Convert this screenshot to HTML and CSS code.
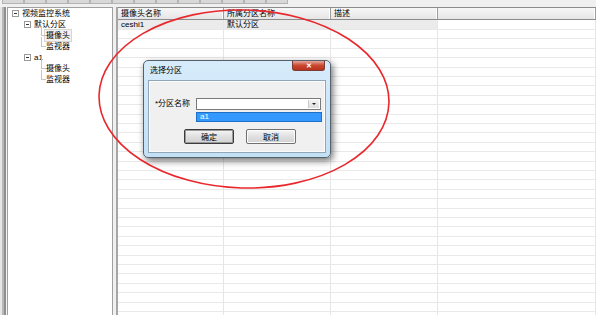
FILE: index.html
```html
<!DOCTYPE html>
<html lang="zh-CN">
<head>
    <meta charset="UTF-8">
    <title>视频监控系统</title>
    <link rel="stylesheet" href="styles.css">
</head>
<body>
<div class="app">
    <div class="tabs">
        <span></span><span></span><span></span><span></span><span></span><span></span>
        <span></span><span></span><span></span><span></span><span></span><span></span><span></span>
    </div>
    <div class="main">
        <div class="edge"></div>
        <div class="tree">
            <div class="node root"><span class="exp"></span>视频监控系统</div>
            <div class="node group"><span class="exp"></span>默认分区</div>
            <div class="node leaf"><span class="sel">摄像头</span></div>
            <div class="node leaf">监视器</div>
            <div class="node group"><span class="exp"></span>a1</div>
            <div class="node leaf">摄像头</div>
            <div class="node leaf">监视器</div>
        </div>
        <div class="gap"></div>
        <div class="grid">
            <div class="head">
                <div class="cell">摄像头名称</div>
                <div class="cell">所属分区名称</div>
                <div class="cell">描述</div>
                <div class="cell last"></div>
            </div>
            <div class="row first">
                <div class="cell">ceshi1</div>
                <div class="cell">默认分区</div>
                <div class="cell"></div>
                <div class="cell last"></div>
            </div>
            <div class="fill">
                <div class="cell"></div>
                <div class="cell"></div>
                <div class="cell"></div>
                <div class="cell last"></div>
            </div>
        </div>
    </div>

    <div class="dlg">
        <div class="dlg-title">
            <span class="dlg-name">选择分区</span>
            <span class="close">✕</span>
        </div>
        <div class="dlg-body">
            <div class="field">
                <label>*分区名称</label>
                <div class="combo">
                    <span class="arrow"></span>
                    <div class="drop">a1</div>
                </div>
            </div>
            <div class="buttons">
                <button class="btn default">确定</button>
                <button class="btn">取消</button>
            </div>
        </div>
    </div>

    <svg class="mark" width="596" height="315" viewBox="0 0 596 315">
        <ellipse cx="244" cy="99" rx="145" ry="89" transform="rotate(1.5 244 99)" fill="none" stroke="#e8282c" stroke-width="1.6"/>
    </svg>
</div>
</body>
</html>
```

FILE: styles.css
```css
body {
    margin: 0;
    font-family: "Liberation Sans", "Noto Sans CJK SC", sans-serif;
    font-size: 8px;
    color: #000;
}

.app {
    position: relative;
    width: 596px;
    height: 315px;
    overflow: hidden;
    background-color: #f0f0f0;
}

.tabs {
    display: flex;
    height: 4px;
    padding-left: 2px;
}

.tabs span {
    width: 20px;
    background-color: #d8d8d8;
    border: 1px solid #b4b4b4;
    border-top: none;
}

.main {
    display: flex;
    height: 308px;
    margin-top: 3px;
}

.edge {
    width: 7px;
    background: linear-gradient(90deg, #e6e6e6 0 2px, #b8b8b8 2px 4px, #8f8f8f 4px 6px, #f4f4f4 6px 7px);
}

.tree {
    width: 104px;
    background-color: #fff;
    border: 1px solid #a0a0a0;
    border-bottom: none;
}

.node {
    position: relative;
    display: flex;
    align-items: center;
    height: 11px;
    line-height: 11px;
    white-space: nowrap;
}

.root {
    padding-left: 4px;
}

.group {
    padding-left: 16px;
}

.leaf {
    padding-left: 38px;
}

.leaf::before {
    content: "";
    position: absolute;
    left: 33px;
    top: -4px;
    width: 4px;
    height: 9px;
    border-left: 1px solid #c4c4c4;
    border-bottom: 1px solid #c4c4c4;
}

.exp {
    position: relative;
    box-sizing: border-box;
    width: 7px;
    height: 7px;
    margin-right: 3px;
    border: 1px solid #9a9a9a;
    background-color: #fff;
}

.exp::after {
    content: "";
    position: absolute;
    left: 1px;
    top: 2px;
    width: 3px;
    height: 1px;
    background-color: #333;
}

.sel {
    padding: 0 1px;
    margin-left: -1px;
    background-color: #f2f2f2;
    outline: 1px solid #d6d6d6;
}

.gap {
    width: 3px;
}

.grid {
    flex: 1;
    display: flex;
    flex-direction: column;
    background-color: #fff;
    border-left: 2px solid #a6a6a6;
}

.head,
.row,
.fill {
    display: flex;
}

.cell {
    box-sizing: border-box;
    width: 107px;
    padding-left: 3px;
    white-space: nowrap;
    overflow: hidden;
}

.cell:first-child {
    width: 106px;
}

.cell.last {
    flex: 1;
    border-right: none;
}

.head {
    height: 13px;
    box-sizing: border-box;
    border-top: 1px solid #8c8c8c;
    border-bottom: 1px solid #8c8c8c;
    background: linear-gradient(#f7f7f7, #e5e5e5);
}

.head .cell {
    line-height: 11px;
    border-right: 1px solid #9c9c9c;
    box-shadow: inset -1px 0 #fff;
}

.row {
    height: 10px;
    box-sizing: border-box;
    border-bottom: 1px solid #e8e8e8;
}

.row .cell {
    line-height: 9px;
    border-right: 1px solid #e6e6e6;
}

.row.first .cell {
    background-color: #ebebeb;
}

.row.first .cell.last {
    background-color: #fff;
}

.fill {
    flex: 1;
    background: repeating-linear-gradient(to bottom, transparent 0 8.4px, #e9e9e9 8.4px 9.4px);
}

.fill .cell {
    border-right: 1px solid #e6e6e6;
}

/* dialog */
.dlg {
    position: absolute;
    left: 143px;
    top: 60px;
    box-sizing: border-box;
    width: 188px;
    height: 98px;
    padding: 0 4px 4px;
    background: linear-gradient(#d7ecfb, #c3e0f5);
    border: 1px solid #55606c;
    border-radius: 5px;
    box-shadow: 2px 3px 7px rgba(0, 0, 0, 0.55);
    display: flex;
    flex-direction: column;
}

.dlg-title {
    display: flex;
    align-items: flex-start;
    height: 19px;
}

.dlg-name {
    margin-top: 5px;
    padding-left: 2px;
    line-height: 10px;
}

.close {
    margin-left: auto;
    margin-right: 1px;
    width: 31px;
    height: 9px;
    line-height: 9px;
    text-align: center;
    font-size: 7px;
    font-weight: bold;
    color: #fff;
    background: linear-gradient(#e8a69c, #c9462f 50%, #b8321d);
    border: 1px solid #7a3b32;
    border-top: none;
    border-radius: 0 0 3px 3px;
}

.dlg-body {
    flex: 1;
    box-sizing: border-box;
    padding: 17px 0 0 6px;
    background-color: #f0f0f0;
    border: 1px solid #8fa6bb;
    box-shadow: inset 0 0 0 1px #fbfbfb;
}

.field {
    display: flex;
    align-items: center;
    height: 12px;
}

.field label {
    width: 41px;
    line-height: 12px;
}

.combo {
    position: relative;
    box-sizing: border-box;
    width: 125px;
    height: 12px;
    background-color: #fff;
    border: 1px solid #7a7a7a;
}

.arrow {
    position: absolute;
    right: 1px;
    top: 1px;
    width: 10px;
    height: 8px;
    background: linear-gradient(#f4f4f4, #dedede);
    border-left: 1px solid #c8c8c8;
}

.arrow::after {
    content: "";
    position: absolute;
    left: 3px;
    top: 3px;
    border-left: 2px solid transparent;
    border-right: 2px solid transparent;
    border-top: 2px solid #222;
}

.drop {
    position: absolute;
    left: -1px;
    top: 13px;
    box-sizing: border-box;
    width: 126px;
    height: 10px;
    padding-left: 3px;
    line-height: 8px;
    color: #fff;
    background-color: #3399ff;
    border: 1px solid #1f6fc4;
}

.buttons {
    display: flex;
    gap: 12px;
    margin-top: 19px;
    padding-left: 29px;
}

.btn {
    box-sizing: border-box;
    width: 50px;
    height: 15px;
    padding: 0;
    font-family: "Liberation Sans", "Noto Sans CJK SC", sans-serif;
    font-size: 8px;
    color: #000;
    background: linear-gradient(#f6f6f6, #e0e0e0 50%, #d2d2d2);
    border: 1px solid #707070;
    border-radius: 2px;
    box-shadow: inset 0 0 0 1px #fcfcfc;
}

.btn.default {
    border-color: #3c3c3c;
    box-shadow: inset 0 0 0 1px #9a9a9a;
}

.mark {
    position: absolute;
    left: 0;
    top: 0;
    pointer-events: none;
}
```
